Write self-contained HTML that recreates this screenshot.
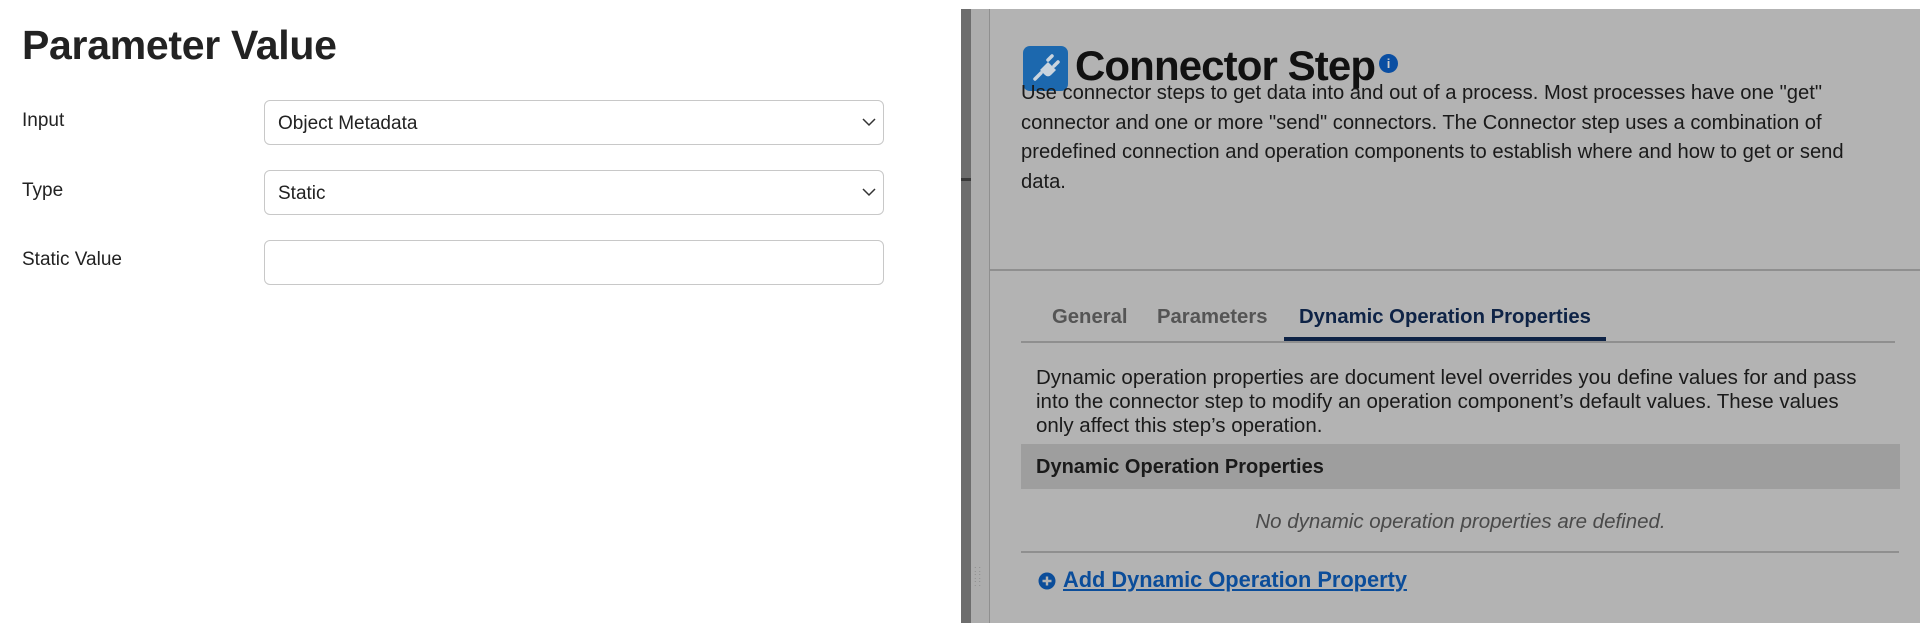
<!DOCTYPE html>
<html><head><meta charset="utf-8"><style>
*{box-sizing:border-box;margin:0;padding:0}
body{width:1920px;height:623px;overflow:hidden;background:#fff;font-family:"Liberation Sans",sans-serif;color:#1f1f1f;position:relative}
.a{position:absolute;white-space:nowrap}
.lbl{font-size:19px;color:#222}
.box{position:absolute;left:264px;width:620px;height:45px;border:1.5px solid #c8c8c8;border-radius:6px;font-size:19px;padding:12px 13px;color:#222}
.chev{position:absolute;right:6px;top:14px}
</style></head><body>
<div class="a" style="left:22px;top:22px;font-size:41px;font-weight:bold;color:#222;letter-spacing:-0.3px">Parameter Value</div>
<div class="a lbl" style="left:22px;top:110px">Input</div>
<div class="a lbl" style="left:22px;top:180px">Type</div>
<div class="a lbl" style="left:22px;top:249px">Static Value</div>
<div class="box" style="top:100px">Object Metadata<svg class="chev" width="16" height="14" viewBox="0 0 16 14"><path d="M2 4l6 6 6-6" fill="none" stroke="#333" stroke-width="1.5"/></svg></div>
<div class="box" style="top:170px">Static<svg class="chev" width="16" height="14" viewBox="0 0 16 14"><path d="M2 4l6 6 6-6" fill="none" stroke="#333" stroke-width="1.5"/></svg></div>
<div class="box" style="top:240px"></div>

<div style="position:absolute;left:961px;top:9px;width:959px;height:614px;background:#b3b3b3"></div>
<div style="position:absolute;left:961px;top:9px;width:10px;height:614px;background:#6d6d6d"></div>
<div style="position:absolute;left:961px;top:178px;width:10px;height:3px;background:#3a3a3a"></div>
<div style="position:absolute;left:971px;top:9px;width:19px;height:614px;background:#adadad;border-right:1.5px solid #8f8f8f"></div>
<div class="a" style="left:974px;top:566px;font-size:9px;color:#888;line-height:7px;letter-spacing:2px">::<br>::<br>::</div>
<div style="position:absolute;left:990px;top:269px;width:930px;height:1.5px;background:#8f8f8f"></div>

<div style="position:absolute;left:1023px;top:46px;width:45px;height:45px;border-radius:7px;background:#1c68ae">
<svg width="45" height="45" viewBox="0 0 45 45"><g fill="none" stroke="#c9d4de" stroke-width="3.5" stroke-linecap="round"><path d="M12 33l6-6"/><path d="M25 14l4-4M31 20l4-4"/></g><path d="M17 24l8-8 8 8-5 5a4 4 0 0 1-6 0l-5-5z" fill="#c9d4de"/></svg></div>
<div class="a" style="left:1075px;top:42px;font-size:42px;font-weight:bold;color:#111;letter-spacing:-0.9px">Connector Step</div>
<div style="position:absolute;left:1379px;top:54px;width:19px;height:19px;border-radius:50%;background:#0a4ea2;color:#ccc;font-size:13px;font-weight:bold;text-align:center;line-height:19px">i</div>
<div class="a" style="left:1021px;top:79px;font-size:20.2px;line-height:29.5px;color:#1a1a1a">Use connector steps to get data into and out of a process. Most processes have one "get"<br>connector and one or more "send" connectors. The Connector step uses a combination of<br>predefined connection and operation components to establish where and how to get or send<br>data.</div>

<div class="a" style="left:1052px;top:306px;font-size:20.3px;font-weight:bold;color:#555">General</div>
<div class="a" style="left:1157px;top:306px;font-size:20.3px;font-weight:bold;color:#555">Parameters</div>
<div class="a" style="left:1299px;top:306px;font-size:20.3px;font-weight:bold;color:#0e2346">Dynamic Operation Properties</div>
<div style="position:absolute;left:1021px;top:341px;width:874px;height:1.5px;background:#8f8f8f"></div>
<div style="position:absolute;left:1284px;top:337px;width:322px;height:3.5px;background:#0e2346"></div>
<div class="a" style="left:1036px;top:366px;font-size:20.5px;line-height:24px;color:#1a1a1a">Dynamic operation properties are document level overrides you define values for and pass<br>into the connector step to modify an operation component’s default values. These values<br>only affect this step’s operation.</div>
<div style="position:absolute;left:1021px;top:444px;width:879px;height:45px;background:#9e9e9e"></div>
<div class="a" style="left:1036px;top:456px;font-size:20px;font-weight:bold;color:#1a1a1a">Dynamic Operation Properties</div>
<div class="a" style="left:1021px;width:879px;text-align:center;top:510px;font-size:20.5px;font-style:italic;color:#4a4a4a">No dynamic operation properties are defined.</div>
<div style="position:absolute;left:1021px;top:551px;width:878px;height:1.5px;background:#8f8f8f"></div>
<svg style="position:absolute;left:1038px;top:572px" width="18" height="18" viewBox="0 0 18 18"><circle cx="9" cy="9" r="8.5" fill="#0b4d9a"/><path d="M9 4.5v9M4.5 9h9" stroke="#b3b3b3" stroke-width="2.4"/></svg>
<div class="a" style="left:1063px;top:567px;font-size:21.8px;font-weight:bold;color:#0b4d9a;text-decoration:underline">Add Dynamic Operation Property</div>
</body></html>
